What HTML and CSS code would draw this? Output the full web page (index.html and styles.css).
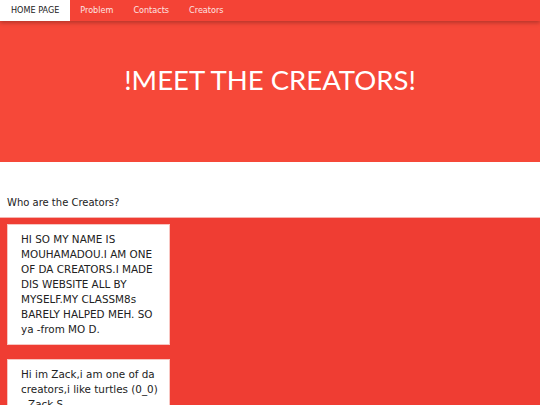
FILE: index.html
```html
<!DOCTYPE html>
<html>
<head>
<meta charset="utf-8">
<link rel="stylesheet" href="styles.css">
</head>
<body>
<nav class="topbar">
  <a class="nav-item active">HOME PAGE</a>
  <a class="nav-item">Problem</a>
  <a class="nav-item">Contacts</a>
  <a class="nav-item">Creators</a>
</nav>
<header class="hero">
  <h1 class="hero-title">!MEET THE CREATORS!</h1>
</header>
<section class="intro">
  <p class="intro-text">Who are the Creators?</p>
</section>
<section class="creators">
  <div class="card">
    <p>HI SO MY NAME IS<br>MOUHAMADOU.I AM ONE<br>OF DA CREATORS.I MADE<br>DIS WEBSITE ALL BY<br>MYSELF.MY CLASSM8s<br>BARELY HALPED MEH. SO<br>ya -from MO D.</p>
  </div>
  <div class="card">
    <p>Hi im Zack,i am one of da<br>creators,i like turtles (0_0)<br>- Zack S.</p>
  </div>
</section>
</body>
</html>
```
FILE: styles.css
```css
html, body {
  margin: 0;
  padding: 0;
  height: 405px;
  overflow: hidden;
}
body {
  font-family: "DejaVu Sans", "Open Sans", sans-serif;
  color: #000;
  background: #fff;
}
.topbar {
  display: flex;
  height: 21px;
  background: #f44336;
  box-shadow: 0 2px 4px rgba(0,0,0,0.25);
  position: relative;
  z-index: 2;
}
.nav-item {
  display: block;
  padding: 0 10px;
  line-height: 21px;
  font-size: 8.1px;
  color: #fde4e2;
}
.nav-item.active {
  padding: 0 11px;
  background: #fff;
  color: #222;
}
.hero {
  box-sizing: border-box;
  height: 141px;
  padding-top: 42px;
  background: #f64839;
  text-align: center;
}
.hero-title {
  margin: 0;
  font-family: Lato, "Liberation Sans", sans-serif;
  font-weight: 400;
  font-size: 27.5px;
  line-height: 34px;
  color: #fff;
}
.intro {
  box-sizing: border-box;
  height: 55px;
  padding-top: 33px;
}
.intro-text {
  margin: 0 0 0 7px;
  font-size: 10px;
  line-height: 15px;
  color: #222;
}
.creators {
  background: #ef3d33;
  border-top: 1px solid #f5b5b0;
  padding: 6px 7px 20px;
  min-height: 300px;
}
.card {
  width: 135px;
  background: #fff;
  padding: 7px 13px 7px;
  margin-bottom: 14px;
  border: 1px solid #f8c6c2;
}
.card p {
  margin: 0;
  font-size: 10.4px;
  line-height: 15px;
  color: #222;
  white-space: nowrap;
}
```
